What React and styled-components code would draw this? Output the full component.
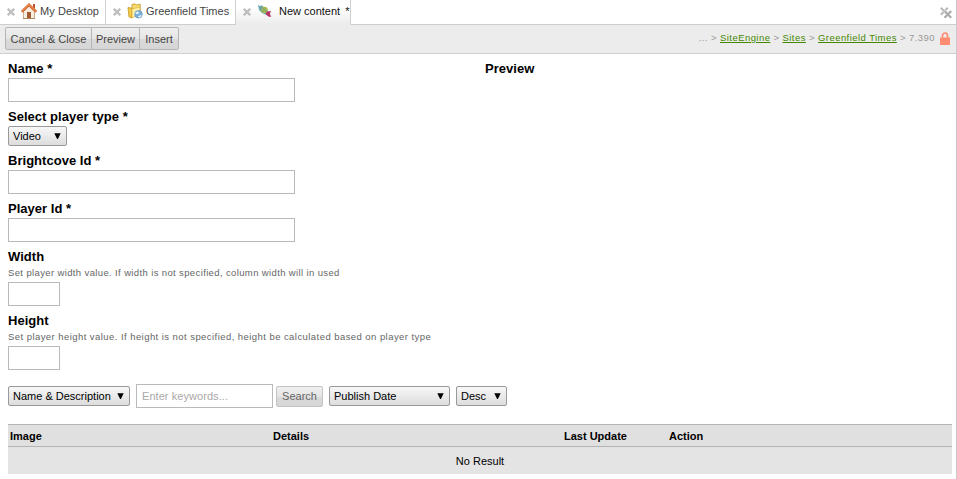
import React from "react";
import styled, { createGlobalStyle } from "styled-components";

const Global = createGlobalStyle`
  * { box-sizing: border-box; }
  body { margin: 0; background: #fff; font: 11px/14px "Liberation Sans", Arial, sans-serif; color: #000; }
  #root { overflow: hidden; height: 479px; }
`;

const Page = styled.div`
  height: 479px;
  border-right: 1px solid #c8c8c8;
`;

const TabBar = styled.div`
  display: flex;
  height: 25px;
`;

const Tab = styled.div`
  display: flex;
  align-items: flex-start;
  width: ${(p) => p.$width}px;
  height: 25px;
  padding-left: 7px;
  border-right: 1px solid #d0d0d0;
  border-bottom: 1px solid ${(p) => (p.$active ? "#ececec" : "#cecece")};
  background: ${(p) => (p.$active ? "linear-gradient(#fff 30%, #ececec)" : "#fff")};
  color: ${(p) => (p.$active ? "#111" : "#444")};
`;

const TabIcon = styled.svg`
  width: 16px;
  height: 16px;
  flex: none;
  margin: 3px ${(p) => p.$after}px 0 ${(p) => p.$before}px;
`;

const TabCross = styled.svg`
  width: 8px;
  height: 8px;
  margin-top: 8px;
  flex: none;
`;

const TabTitle = styled.span`
  margin: 4px 0 0 ${(p) => p.$gap || 0}px;
  letter-spacing: ${(p) => p.$spacing || 0}px;
  white-space: pre;
`;

const TabFill = styled.div`
  flex: 1;
  display: flex;
  justify-content: flex-end;
  padding: 7px 4px 0 0;
  border-bottom: 1px solid #cecece;
`;

const Toolbar = styled.div`
  display: flex;
  justify-content: space-between;
  height: 29px;
  padding: 2px 6px 0 5px;
  background: #ececec;
  border-bottom: 1px solid #cecece;
`;

const ButtonGroup = styled.div`
  display: flex;
`;

const Button = styled.button`
  width: ${(p) => p.$width}px;
  height: ${(p) => p.$height || 23}px;
  padding: 0;
  margin-left: ${(p) => (p.$joined ? -1 : 0)}px;
  border: 1px solid ${(p) => (p.$muted ? "#c4c4c4" : "#b5b5b5")};
  border-radius: ${(p) => p.$radius || "2px"};
  background: linear-gradient(#efefef 0%, #e5e5e5 50%, #dadada 51%, #d6d6d6 100%);
  font: inherit;
  color: ${(p) => (p.$muted ? "#666" : "#444")};
`;

const Crumbs = styled.nav`
  display: flex;
  font-size: 9.5px;
  letter-spacing: 0.44px;
  line-height: 12px;
  padding-top: 5px;
  white-space: pre;
  color: #999;
`;

const Crumb = styled.a`
  color: #458700;
  text-decoration: underline;
`;

const Lock = styled.svg`
  width: 10px;
  height: 13px;
  margin-left: 5px;
`;

const Content = styled.main`
  padding: 8px 4px 0 8px;
`;

const Columns = styled.div`
  display: grid;
  grid-template-columns: 477px 1fr;
`;

const Field = styled.div`
  height: ${(p) => p.$height}px;
`;

const Label = styled.div`
  height: 16px;
  line-height: 13px;
  font-size: 13px;
  font-weight: bold;
  letter-spacing: 0.03px;
`;

const Hint = styled.div`
  height: 16px;
  font-size: 9.5px;
  line-height: 13px;
  letter-spacing: ${(p) => p.$spacing}px;
  white-space: nowrap;
  color: #666;
`;

const Input = styled.input`
  display: block;
  width: ${(p) => p.$width}px;
  height: 24px;
  padding: 0 5px;
  border: 1px solid #bababa;
  border-radius: 0;
  background: #fff;
  outline: none;
  font: inherit;
  &::placeholder { color: #a9a9a9; letter-spacing: 0.06px; }
`;

const Picker = styled.button`
  display: flex;
  align-items: center;
  justify-content: space-between;
  width: ${(p) => p.$width}px;
  height: 20px;
  padding: 0 5px 0 4px;
  border: 1px solid #999;
  border-radius: 2px;
  background: linear-gradient(#f8f8f8, #dddddd);
  font: inherit;
  color: #000;
`;

const Filters = styled.div`
  display: flex;
  align-items: center;
  height: 24px;
  margin-bottom: 16px;
`;

const Gap = styled.div`
  width: ${(p) => p.$width}px;
`;

const Table = styled.div`
  width: 944px;
  background: #e4e4e4;
`;

const HeadRow = styled.div`
  display: grid;
  grid-template-columns: 263px 291px 105px 1fr;
  height: 23px;
  padding: 4px 2px 0;
  border-top: 1px solid #b4b4b4;
  border-bottom: 1px solid #b4b4b4;
  background: #e0e0e0;
  font-weight: bold;
`;

const EmptyRow = styled.div`
  height: 27px;
  padding-top: 7px;
  text-align: center;
`;

const Cross = () => (
  <TabCross viewBox="0 0 8 8">
    <path d="M.8 .8l6.400 6.400M7.200 .8L.8 7.200" stroke="#bfbfbf" strokeWidth="2.300" />
  </TabCross>
);

const HomeIcon = () => (
  <TabIcon $before={6} $after={3} viewBox="0 0 16 16">
    <path d="M12 1h2v5l-2-2z" fill="#b9502c" />
    <path d="M2.500 8L8 3l5.500 5v7.500h-11z" fill="#f7eee0" stroke="#c59a70" strokeWidth=".8" />
    <path d="M.8 8.800L8 1.800l7.200 7" fill="none" stroke="#d2622c" strokeWidth="2.500" />
    <path d="M1 8.400L8 1.600l7 6.800" fill="none" stroke="#f7a060" strokeWidth="1" />
    <path d="M6 9h4v6.500H6z" fill="#a35b32" />
    <path d="M2 15.500h4M10 15.500h4" stroke="#a58b60" />
  </TabIcon>
);

const FolderIcon = () => (
  <TabIcon $before={6} $after={3} viewBox="0 0 16 16">
    <path d="M5 1.500l3-.7 1.200 1.200 4-.8v10l-8.200 1z" fill="#f8dc70" stroke="#c39422" strokeWidth=".8" />
    <path d="M1 4.500l4 .7v9.800l-3-1z" fill="#f6cc48" stroke="#c39422" strokeWidth=".8" />
    <path d="M5 6l8-2v7l-8 4z" fill="#fff0a8" stroke="#d6aa36" strokeWidth=".6" />
    <circle cx="11.500" cy="11.300" r="3.800" fill="#77aedb" stroke="#5b91bd" strokeWidth=".6" />
    <path d="M8 10l3-1.800 1 2-2 1zM11 13.500l3.500-2-.5 2.300-2 .7z" fill="#e5f3fb" />
  </TabIcon>
);

const ContentIcon = () => (
  <TabIcon $before={6} $after={4} viewBox="0 0 16 16">
    <path d="M1 1.500l1.500 1.500L5 2.500l3 2.500 3 3-1.500 4L5 10 2 7z" fill="#6aa5aa" />
    <circle cx="7.500" cy="7" r="3.200" fill="#a9b94a" />
    <path d="M5 5.500c2 0 3.500 1.500 4.500 3.500M5.500 9l3-3" fill="none" stroke="#6c9f91" strokeWidth=".8" />
    <path d="M9 9.500l2-1.300h3.200l-1.400 2.200 1.400 3.600-3-.5-2.200-2z" fill="#b63765" />
  </TabIcon>
);

const CloseAll = () => (
  <svg width="12" height="12" viewBox="0 0 12 12">
    <path d="M.8 .8l7 7M7.800 .8l-7 7" stroke="#b8b8b8" strokeWidth="2" />
    <path d="M4.300 3.800l7 7M11.300 3.800l-7 7" stroke="#fff" strokeWidth="3" />
    <path d="M4.500 4l6.700 6.700M11.200 4l-6.700 6.700" stroke="#ababab" strokeWidth="2.200" />
  </svg>
);

const Arrow = () => (
  <svg width="7" height="7" viewBox="0 0 7 7">
    <path d="M.3 .3h6.400L3.900 6h-.8z" fill="#000" />
  </svg>
);

const Select = ({ width, children }) => (
  <Picker $width={width}>
    {children}
    <Arrow />
  </Picker>
);

export default function App() {
  return (
    <Page>
      <Global />
      <TabBar>
        <Tab $width={106}>
          <Cross />
          <HomeIcon />
          <TabTitle $spacing={0.1}>My Desktop</TabTitle>
        </Tab>
        <Tab $width={130}>
          <Cross />
          <FolderIcon />
          <TabTitle>Greenfield Times</TabTitle>
        </Tab>
        <Tab $width={115} $active>
          <Cross />
          <ContentIcon />
          <TabTitle $gap={2}>New content</TabTitle>
          <TabTitle $gap={5}>*</TabTitle>
        </Tab>
        <TabFill>
          <CloseAll />
        </TabFill>
      </TabBar>
      <Toolbar>
        <ButtonGroup>
          <Button $width={87} $radius="2px 0 0 2px">Cancel &amp; Close</Button>
          <Button $width={49} $radius="0" $joined>Preview</Button>
          <Button $width={40} $radius="0 2px 2px 0" $joined>Insert</Button>
        </ButtonGroup>
        <Crumbs>
          <span>... &gt; </span>
          <Crumb>SiteEngine</Crumb>
          <span> &gt; </span>
          <Crumb>Sites</Crumb>
          <span> &gt; </span>
          <Crumb>Greenfield Times</Crumb>
          <span> &gt; 7.390</span>
          <Lock viewBox="0 0 10 13">
            <path d="M2.500 6V3.500a2.500 2.500 0 0 1 5 0V6" fill="none" stroke="#ff8c70" strokeWidth="1.700" />
            <path d="M0 5.500h10V13H0z" fill="#ff8c70" />
          </Lock>
        </Crumbs>
      </Toolbar>
      <Content>
        <Columns>
          <div>
            <Field $height={48}>
              <Label>Name *</Label>
              <Input $width={287} />
            </Field>
            <Field $height={44}>
              <Label>Select player type *</Label>
              <Select width={59}>Video</Select>
            </Field>
            <Field $height={48}>
              <Label>Brightcove Id *</Label>
              <Input $width={287} />
            </Field>
            <Field $height={48}>
              <Label>Player Id *</Label>
              <Input $width={287} />
            </Field>
            <Field $height={64}>
              <Label>Width</Label>
              <Hint $spacing={0.37}>Set player width value. If width is not specified, column width will in used</Hint>
              <Input $width={52} />
            </Field>
            <Field $height={70}>
              <Label>Height</Label>
              <Hint $spacing={0.44}>Set player height value. If height is not specified, height be calculated based on player type</Hint>
              <Input $width={52} />
            </Field>
          </div>
          <Label>Preview</Label>
        </Columns>
        <Filters>
          <Select width={122}>Name &amp; Description</Select>
          <Gap $width={6} />
          <Input $width={137} placeholder="Enter keywords..." />
          <Gap $width={3} />
          <Button $width={47} $height={21} $muted>Search</Button>
          <Gap $width={6} />
          <Select width={121}>Publish Date</Select>
          <Gap $width={6} />
          <Select width={51}>Desc</Select>
        </Filters>
        <Table>
          <HeadRow>
            <span>Image</span>
            <span>Details</span>
            <span>Last Update</span>
            <span>Action</span>
          </HeadRow>
          <EmptyRow>No Result</EmptyRow>
        </Table>
      </Content>
    </Page>
  );
}
